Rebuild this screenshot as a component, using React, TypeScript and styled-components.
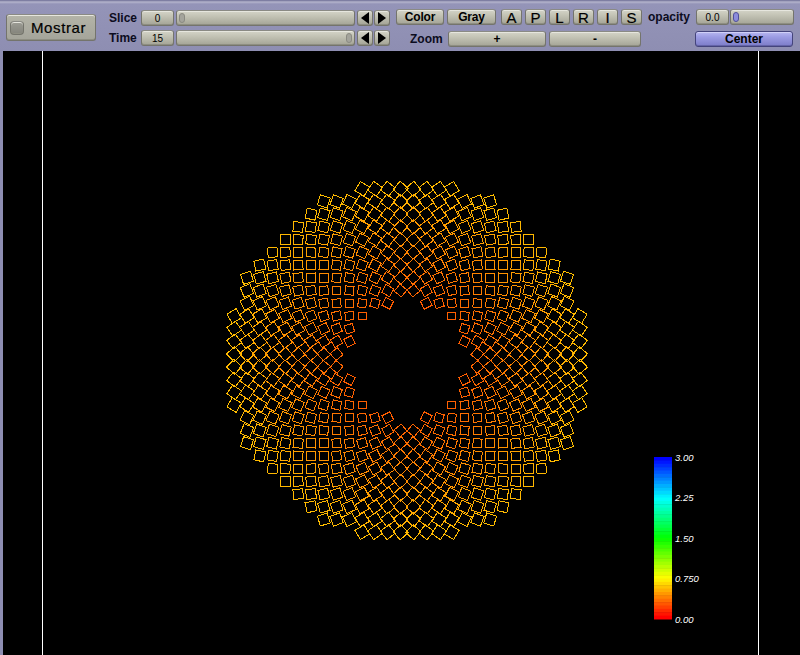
import styled, { createGlobalStyle } from "styled-components";

const GlobalStyle = createGlobalStyle`
    html, body {
        margin: 0;
        padding: 0;
        overflow: hidden;
        background-color: #8e8eb2;
    }
    #root {
        width: 800px;
        height: 655px;
    }
`;

const CX = 407;
const CY = 360.5;
const PITCH_X = 12.8;
const PITCH_Y = 12.72;

type Cell = { points: string; color: string };

function buildCells(): Cell[] {
    const cells: Cell[] = [];
    for (let i = -16; i < 16; i++) {
        for (let j = -16; j < 16; j++) {
            const x = CX + (i + 0.5) * PITCH_X;
            const y = CY + (j + 0.5) * PITCH_Y;
            const dx = x - CX;
            const dy = y - CY;
            const r = Math.hypot(dx, dy);
            if (r < 58 || r > 180.5) continue;
            const t = (r - 64) / 108;
            const theta = Math.atan2(dy, dx);
            // squares read a little bigger where they stand as diamonds
            const diamond = Math.abs(Math.sin(2 * theta + Math.PI / 2));
            const half = (7.8 + t * 1.7 + diamond * 1.2) / 2;
            const angle = theta + Math.PI / 4;
            const corners = [
                [-half, -half],
                [half, -half],
                [half, half],
                [-half, half],
            ].map(([a, b]) => {
                const px = x + a * Math.cos(angle) - b * Math.sin(angle);
                const py = y + a * Math.sin(angle) + b * Math.cos(angle);
                return `${px.toFixed(1)},${py.toFixed(1)}`;
            });
            const green = Math.round(Math.min(190, Math.max(85, 96 + t * 88)));
            cells.push({ points: corners.join(" "), color: `rgb(255,${green},0)` });
        }
    }
    return cells;
}

// 0 red, 0.75 yellow, 1.5 green, 2.25 cyan, 3 blue
function scaleColor(v: number) {
    const s = Math.max(0, Math.min(1, v)) * 4;
    if (s < 1) return `rgb(255,${Math.round(s * 255)},0)`;
    if (s < 2) return `rgb(${Math.round((2 - s) * 255)},255,0)`;
    if (s < 3) return `rgb(0,255,${Math.round((s - 2) * 255)})`;
    return `rgb(0,${Math.round((4 - s) * 255)},255)`;
}

const cells = buildCells();
const BANDS = 48;
const bands = Array.from({ length: BANDS }, (_, i) => i);
const labels = [
    { text: "3.00", y: 461 },
    { text: "2.25", y: 501 },
    { text: "1.50", y: 542 },
    { text: "0.750", y: 582 },
    { text: "0.00", y: 623 },
];

function VolumeView() {
    return (
        <Canvas viewBox="3 51 797 604" width={797} height={604}>
            <Frame x={42} y={51} width={1} height={604} />
            <Frame x={758} y={51} width={1} height={604} />
            {cells.map((c, i) => (
                <Square key={i} points={c.points} stroke={c.color} />
            ))}
            {bands.map((b) => (
                <rect
                    key={b}
                    x={654}
                    y={457 + (b * 162) / BANDS}
                    width={18}
                    height={162 / BANDS + 0.5}
                    fill={scaleColor(1 - b / (BANDS - 1))}
                />
            ))}
            {labels.map((l) => (
                <ScaleLabel key={l.text} x={675} y={l.y}>
                    {l.text}
                </ScaleLabel>
            ))}
        </Canvas>
    );
}

function SliderRow(props: { label: string; value: string; thumb: number }) {
    return (
        <Row $gap={2}>
            <Label $width={30}>{props.label}</Label>
            <Field $width={33}>{props.value}</Field>
            <Track $width={179}>
                <Thumb $left={props.thumb} />
            </Track>
            <Arrows>
                <ArrowButton>
                    <ArrowLeft />
                </ArrowButton>
                <ArrowButton>
                    <ArrowRight />
                </ArrowButton>
            </Arrows>
        </Row>
    );
}

export default function App() {
    return (
        <Page>
            <GlobalStyle />
            <Toolbar>
                <MostrarButton>
                    <CheckBox />
                    Mostrar
                </MostrarButton>
                <Column $width={286} $left={13} $top={1} $gap={4}>
                    <SliderRow label="Slice" value="0" thumb={2} />
                    <SliderRow label="Time" value="15" thumb={169} />
                </Column>
                <Column $width={246} $left={1} $top={0} $gap={6}>
                    <Row $gap={3}>
                        <TextButton $width={48}>Color</TextButton>
                        <TextButton $width={49}>Gray</TextButton>
                        <Letters>
                            {["A", "P", "L", "R", "I", "S"].map((l) => (
                                <LetterButton key={l}>{l}</LetterButton>
                            ))}
                        </Letters>
                    </Row>
                    <Row $gap={3}>
                        <ZoomLabel>Zoom</ZoomLabel>
                        <TextButton $width={98}>+</TextButton>
                        <TextButton $width={92}>-</TextButton>
                    </Row>
                </Column>
                <Column $width={148} $left={6} $top={0} $gap={6}>
                    <Row $gap={1}>
                        <Label $width={44}>opacity</Label>
                        <Field $width={33} $left={3}>0.0</Field>
                        <Track $width={64}>
                            <Thumb $left={2} $blue />
                        </Track>
                    </Row>
                    <Row>
                        <CenterButton>Center</CenterButton>
                    </Row>
                </Column>
            </Toolbar>
            <Viewer>
                <VolumeView />
            </Viewer>
        </Page>
    );
}

const Page = styled.div`
    display: flex;
    flex-direction: column;
    width: 800px;
    height: 655px;
    font-family: "Liberation Sans", Arial, sans-serif;
    color: #000;
`;

const Toolbar = styled.div`
    display: flex;
    align-items: flex-start;
    box-sizing: border-box;
    height: 51px;
    flex: none;
    padding: 9px 0 0 6px;
    background-color: #9090b4;
    background-image: linear-gradient(#6c6c94 0, #b4b4cc 2px, #9494b8 4px, #8e8eb2 100%);
`;

const Viewer = styled.div`
    flex: 1;
    margin-left: 3px;
    background-color: #000;
    overflow: hidden;
`;

const Canvas = styled.svg`
    display: block;
`;

const Frame = styled.rect`
    fill: #fff;
`;

const Square = styled.polygon`
    fill: none;
    stroke-width: 1;
    shape-rendering: crispEdges;
`;

const ScaleLabel = styled.text`
    fill: #fff;
    font-family: "Liberation Sans", Arial, sans-serif;
    font-size: 9.5px;
    font-style: italic;
`;

const Bevel = styled.div`
    box-sizing: border-box;
    border: 1px solid #74746c;
    border-top-color: #8a8a84;
    border-radius: 3px;
    background-image: linear-gradient(#d4d4c8 0, #c4c4b6 35%, #a4a496 100%);
    box-shadow: inset 0 1px 0 #e6e6de, inset 0 -1px 0 #8e8e82;
`;

const MostrarButton = styled(Bevel)`
    display: flex;
    align-items: center;
    gap: 7px;
    width: 90px;
    height: 27px;
    margin-top: 5px;
    padding-left: 3px;
    font-size: 15px;
    letter-spacing: 0.6px;
    -webkit-text-stroke: 0.2px #000;
    color: #000;
    background-image: linear-gradient(#b4b4a8 0, #a4a49a 100%);
`;

const CheckBox = styled(Bevel)`
    width: 14px;
    height: 14px;
    border-radius: 4px;
    background-image: linear-gradient(#9c9c94, #84847c);
`;

const Column = styled.div<{ $width: number; $left: number; $top: number; $gap: number }>`
    display: flex;
    flex-direction: column;
    gap: ${(p) => p.$gap}px;
    width: ${(p) => p.$width}px;
    margin-left: ${(p) => p.$left}px;
    margin-top: ${(p) => p.$top}px;
    flex: none;
`;

const Row = styled.div<{ $gap?: number }>`
    display: flex;
    align-items: center;
    gap: ${(p) => p.$gap ?? 1}px;
    height: 16px;
`;

const Label = styled.span<{ $width: number }>`
    width: ${(p) => p.$width}px;
    font-size: 12px;
    font-weight: bold;
    white-space: nowrap;
    color: #0c0c20;
    flex: none;
`;

const ZoomLabel = styled(Label).attrs({ $width: 49 })`
    padding-left: 14px;
    box-sizing: border-box;
`;

const Field = styled(Bevel)<{ $width: number; $left?: number }>`
    display: flex;
    align-items: center;
    justify-content: center;
    width: ${(p) => p.$width}px;
    height: 16px;
    margin-left: ${(p) => p.$left ?? 0}px;
    font-size: 10px;
    flex: none;
`;

const Track = styled(Bevel)<{ $width: number }>`
    position: relative;
    width: ${(p) => p.$width}px;
    height: 16px;
    flex: none;
`;

const Thumb = styled.div<{ $left: number; $blue?: boolean }>`
    position: absolute;
    top: 2px;
    left: ${(p) => p.$left}px;
    width: 6px;
    height: 10px;
    border-radius: 3px;
    box-sizing: border-box;
    border: 1px solid ${(p) => (p.$blue ? "#50509a" : "#8a8a82")};
    background-color: ${(p) => (p.$blue ? "#8c8cdc" : "#a4a49c")};
`;

const Arrows = styled.div`
    display: flex;
    gap: 1px;
`;

const ArrowButton = styled(Bevel)`
    display: flex;
    align-items: center;
    justify-content: center;
    width: 16px;
    height: 16px;
    flex: none;
`;

const ArrowLeft = styled.div`
    border-top: 6px solid transparent;
    border-bottom: 6px solid transparent;
    border-right: 8px solid #000;
`;

const ArrowRight = styled.div`
    border-top: 6px solid transparent;
    border-bottom: 6px solid transparent;
    border-left: 8px solid #000;
`;

const TextButton = styled(Bevel)<{ $width: number }>`
    display: flex;
    align-items: center;
    justify-content: center;
    width: ${(p) => p.$width}px;
    height: 16px;
    font-size: 12px;
    font-weight: bold;
    letter-spacing: -0.2px;
    flex: none;
`;

const Letters = styled.div`
    display: flex;
    gap: 3px;
    margin-left: 2px;
`;

const LetterButton = styled(Bevel)`
    display: flex;
    align-items: center;
    justify-content: center;
    width: 21px;
    height: 16px;
    font-size: 15px;
    -webkit-text-stroke: 0.2px #000;
    flex: none;
`;

const CenterButton = styled(Bevel)`
    display: flex;
    align-items: center;
    justify-content: center;
    width: 98px;
    height: 16px;
    margin-left: 47px;
    font-size: 12px;
    font-weight: bold;
    border-color: #44447c;
    background-image: linear-gradient(#b8b8f0 0, #9c9ce4 35%, #7c7cc8 100%);
    box-shadow: inset 0 1px 0 #d0d0f8, inset 0 -1px 0 #6464a8;
`;
